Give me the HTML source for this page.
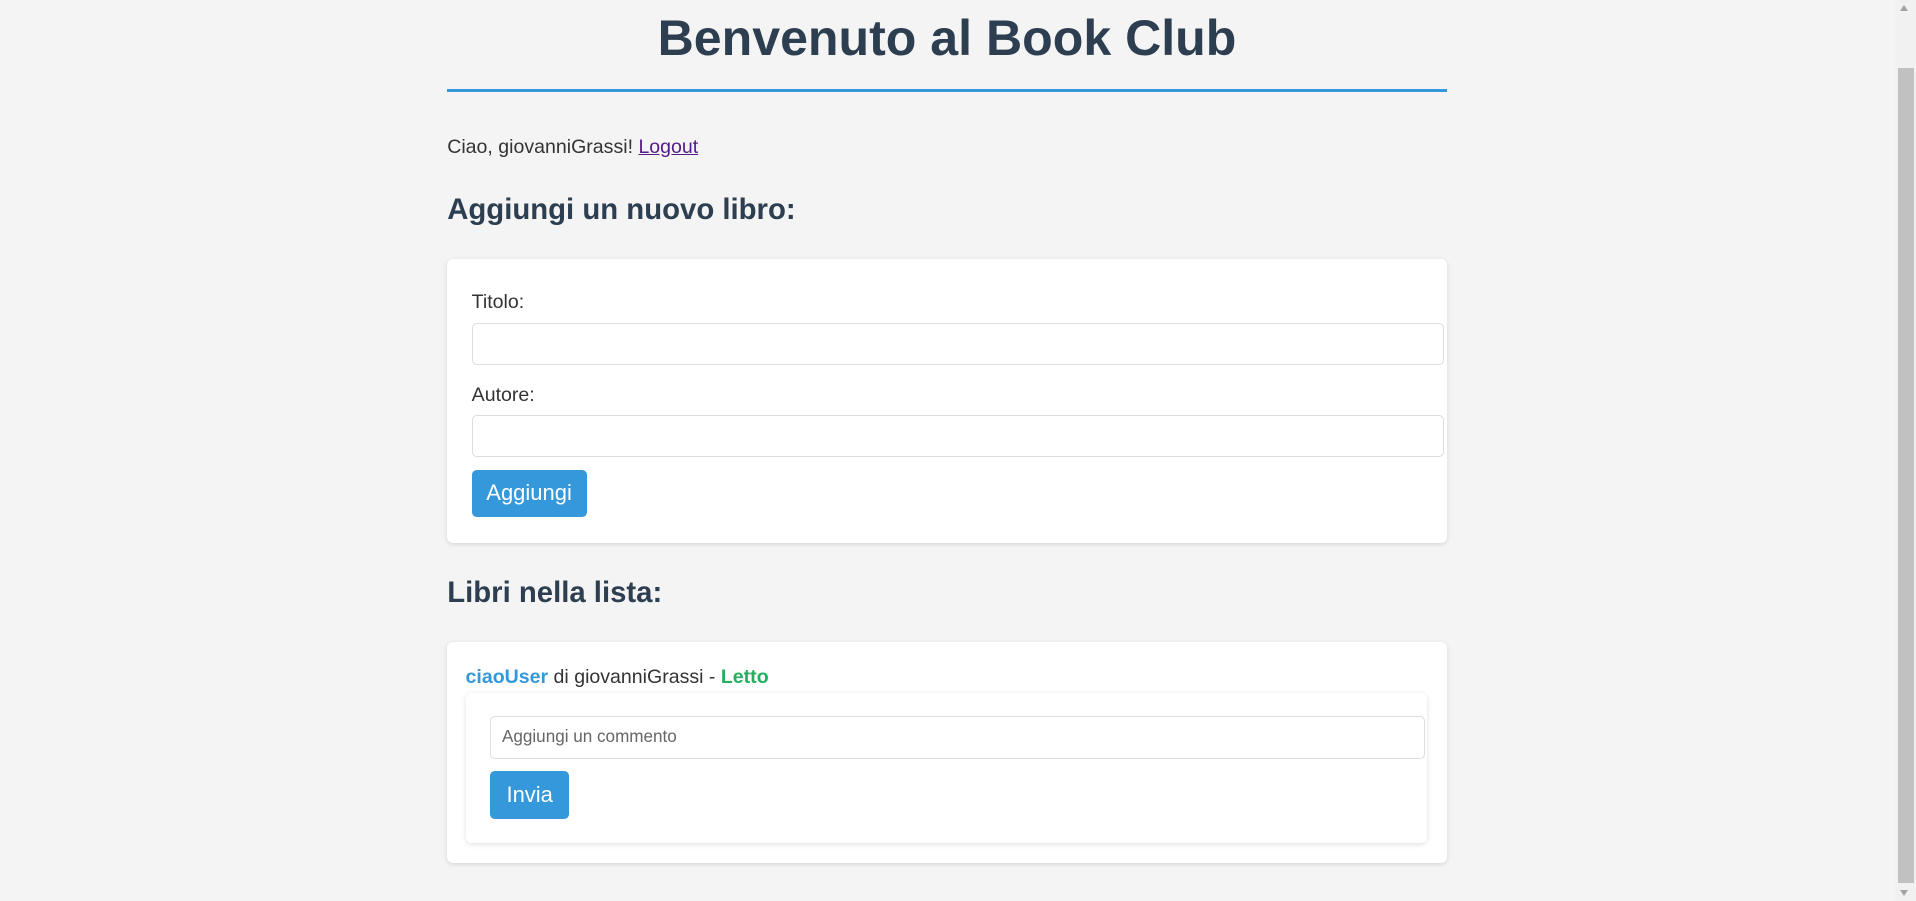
<!DOCTYPE html>
<html><head><meta charset="utf-8"><style>
html{zoom:1.22194}
body{margin:0;width:1568px;height:737px;background:#f4f4f4;font-family:"Liberation Sans",Arial,sans-serif;color:#333;overflow:hidden;position:relative}
.a{position:absolute}
h1{position:absolute;margin:0;left:366px;width:818px;text-align:center;top:7px;font-size:41px;line-height:48px;color:#2c3e50}
.hr{left:366px;width:818px;top:73px;height:2px;background:#3498db}
h2{position:absolute;margin:0;font-size:24px;line-height:28px;color:#2c3e50;left:366px}
.card{background:#fff;border-radius:5px;box-shadow:0 1px 4px rgba(0,0,0,.12)}
.inp{background:#fff;border:1px solid #ddd;border-radius:4px;box-sizing:border-box}
.btn{background:#3498db;color:#fff;border-radius:4px;font-size:18px;text-align:center}
.t{font-size:16px;line-height:18px}
</style></head><body>
<h1>Benvenuto al Book Club</h1>
<div class="a hr"></div>
<div class="a t" style="left:366px;top:111px">Ciao, giovanniGrassi! <span style="color:#551a8b;text-decoration:underline">Logout</span></div>
<h2 style="top:158px">Aggiungi un nuovo libro:</h2>
<div class="a card" style="left:366px;top:212px;width:818px;height:232px"></div>
<div class="a t" style="left:386px;top:238px">Titolo:</div>
<div class="a inp" style="left:386px;top:264px;width:796px;height:35px"></div>
<div class="a t" style="left:386px;top:314px">Autore:</div>
<div class="a inp" style="left:386px;top:340px;width:796px;height:34px"></div>
<div class="a btn" style="left:386px;top:385px;width:94px;height:38px;line-height:38px">Aggiungi</div>
<h2 style="top:471px">Libri nella lista:</h2>
<div class="a card" style="left:366px;top:525px;width:818px;height:181px"></div>
<div class="a t" style="left:381px;top:545px"><b style="color:#3498db">ciaoUser</b> di giovanniGrassi - <b style="color:#27ae60">Letto</b></div>
<div class="a card" style="left:381px;top:567px;width:787px;height:123px;box-shadow:0 1px 5px rgba(0,0,0,.12)"></div>
<div class="a inp" style="left:401px;top:586px;width:765px;height:35px;font-size:14px;color:#666;line-height:33px;padding-left:9px">Aggiungi un commento</div>
<div class="a btn" style="left:401px;top:631px;width:65px;height:39px;line-height:39px">Invia</div>
<div class="a" style="left:1551px;top:0;width:17px;height:737px;background:#f1f1f1"></div>
<div class="a" style="left:1553px;top:56px;width:13px;height:667px;background:#c1c1c1"></div>
<div class="a" style="left:1555px;top:4px;width:0;height:0;border-left:4px solid transparent;border-right:4px solid transparent;border-bottom:5px solid #a3a3a3"></div>
<div class="a" style="left:1555px;top:728px;width:0;height:0;border-left:4px solid transparent;border-right:4px solid transparent;border-top:5px solid #a3a3a3"></div>
</body></html>
